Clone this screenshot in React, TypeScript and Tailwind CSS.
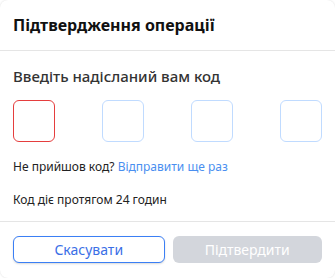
export default function App() {
  const cells = [0, 1, 2, 3];
  return (
    <div className="h-[278px] w-[335px] bg-white font-['Noto_Sans',sans-serif]">
      <div className="flex h-full flex-col rounded-lg bg-white shadow-[0_0_2px_rgba(0,0,0,0.15)]">
        <div className="flex h-[51px] items-center border-b border-[#e5e5e5] px-[13px]">
          <h1 className="text-[16px] font-bold text-[#111]">Підтвердження операції</h1>
        </div>
        <div className="flex flex-1 flex-col px-[13px]">
          <p className="mt-[15px] text-[15px] font-medium leading-[20px] text-[#333]">Введіть надісланий вам код</p>
          <div className="mt-[14px] flex justify-between">
            {cells.map((i) => (
              <div
                key={i}
                className={`h-[42px] w-[42px] rounded-[6px] border ${i === 0 ? "border-[#e53e3e]" : "border-[#c0dbff]"}`}
              />
            ))}
          </div>
          <p className="mt-[16px] text-[12px] leading-[18px] text-[#222]">
            Не прийшов код? <span className="text-[#4a8ff0]">Відправити ще раз</span>
          </p>
          <p className="mt-[15px] text-[12px] leading-[18px] text-[#222]">Код діє протягом 24 годин</p>
        </div>
        <div className="flex gap-[8px] border-t border-[#e5e5e5] px-[13px] pb-[15px] pt-[14px]">
          <button className="h-[27px] flex-1 rounded-[6px] border border-[#3b7ff5] bg-white text-[14px] text-[#3b6fe6] shadow-[0_1px_2px_rgba(0,0,0,0.15)]">
            Скасувати
          </button>
          <button className="h-[27px] flex-1 rounded-[6px] bg-[#d3d6dc] text-[14px] text-white">
            Підтвердити
          </button>
        </div>
      </div>
    </div>
  );
}
